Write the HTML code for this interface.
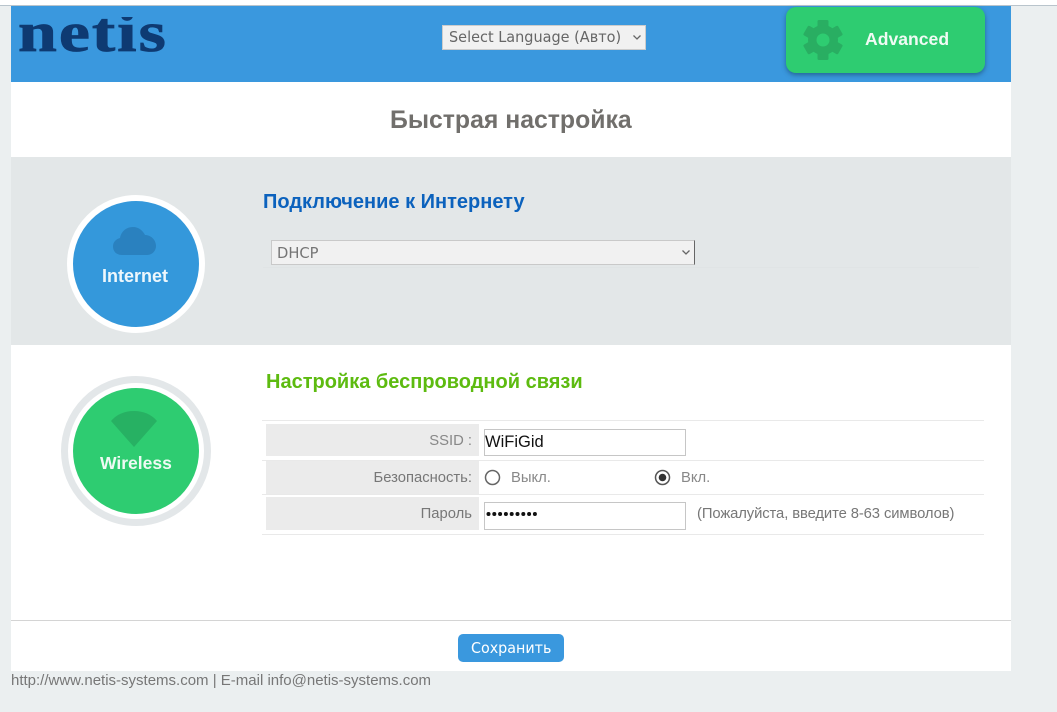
<!DOCTYPE html>
<html><head><meta charset="utf-8">
<style>
html,body{margin:0;padding:0;width:1057px;height:712px;overflow:hidden;background:#ebeff0;font-family:"Liberation Sans",sans-serif;}
.a{position:absolute;}
.t{position:absolute;white-space:nowrap;line-height:1;}
</style></head><body>
<div class="a" style="left:0;top:0;width:1057px;height:5px;background:#fff"></div>
<div class="a" style="left:0;top:5px;width:1057px;height:1px;background:#b9c4cc"></div>
<div class="a" style="left:11px;top:6px;width:1000px;height:76px;background:#3a98de"></div>
<div class="a" style="left:11px;top:82px;width:1000px;height:589px;background:#fff"></div>

<div class="t" style="left:18px;top:5px;font-family:'Liberation Serif',serif;font-weight:bold;font-size:56px;color:#0e3a72;letter-spacing:1.6px;-webkit-text-stroke:.8px #0e3a72;transform-origin:0 0;transform:scaleX(1.248);clip-path:inset(12px -5px 0 -5px)">netis</div>

<div class="a" style="left:442px;top:25px;width:204px;height:25px;box-sizing:border-box;background:#f1f1f1;border:1px solid #ccc"></div>
<div class="t" style="left:449px;top:30px;font-family:'DejaVu Sans',sans-serif;font-size:15px;color:#666;transform-origin:0 0;transform:scaleX(.964)">Select Language (Авто)</div>
<svg class="a" style="left:631px;top:33px" width="14" height="10"><path d="M2.500 2.500l3.500 3.500 3.500-3.500" fill="none" stroke="#666" stroke-width="1.300"/></svg>

<div class="a" style="left:786px;top:7px;width:199px;height:66px;background:#2ecc71;border-radius:10px;box-shadow:0 2px 5px rgba(20,60,90,.55)"></div>
<svg class="a" style="left:802px;top:19px" width="42" height="42" viewBox="0 0 42 42"><g fill="#29ae62"><rect x="15.500" y="1" width="11" height="40" rx="1.500"/><rect x="15.500" y="1" width="11" height="40" rx="1.500" transform="rotate(60 21 21)"/><rect x="15.500" y="1" width="11" height="40" rx="1.500" transform="rotate(120 21 21)"/><circle cx="21" cy="21" r="15"/></g><circle cx="21" cy="21" r="6.500" fill="#2ecc71"/></svg>
<div class="t" style="left:865px;top:31px;font-weight:bold;font-size:17.600px;color:#f0fbf4">Advanced</div>

<div class="t" style="left:390px;top:109px;font-weight:bold;font-size:24.800px;color:#716f6c">Быстрая настройка</div>

<div class="a" style="left:11px;top:157px;width:1000px;height:188px;background:#e3e7e8"></div>

<div class="a" style="left:67px;top:195px;width:138px;height:138px;border-radius:50%;background:#fff"></div>
<div class="a" style="left:73px;top:201px;width:126px;height:126px;border-radius:50%;background:#3498db"></div>
<svg class="a" style="left:112px;top:226px" width="46" height="30" viewBox="0 0 46 30"><path fill="#2a81bf" d="M10 29C4 29 1 25 1 20.500 1 16 4 13 8 12 9 6 14 1 21 1 27 1 31 5 33 9 39 9 44 14 44 20 44 25 40 29 35 29z"/></svg>
<div class="t" style="left:102px;top:267px;font-weight:bold;font-size:18px;color:#eef7fc">Internet</div>

<div class="t" style="left:263px;top:192px;font-weight:bold;font-size:20px;color:#0c62bd">Подключение к Интернету</div>
<div class="a" style="left:271px;top:240px;width:424px;height:25px;box-sizing:border-box;background:#f1f1f1;border:1px solid #c9c9c9;border-right:1px solid #666"></div>
<div class="t" style="left:277px;top:246px;font-family:'DejaVu Sans',sans-serif;font-size:15px;color:#757575;transform-origin:0 0;transform:scaleX(.98)">DHCP</div>
<svg class="a" style="left:680px;top:248px" width="14" height="10"><path d="M2.500 2.500l3.500 3.500 3.500-3.500" fill="none" stroke="#666" stroke-width="1.300"/></svg>
<div class="a" style="left:263px;top:267px;width:716px;height:1px;background:#e0e4e5"></div>

<div class="a" style="left:61px;top:376px;width:150px;height:150px;box-sizing:border-box;border-radius:50%;border:7px solid #e3e7e9;background:#fff"></div>
<div class="a" style="left:73px;top:388px;width:126px;height:126px;border-radius:50%;background:#2ecc71"></div>
<svg class="a" style="left:110px;top:410px" width="48" height="38" viewBox="0 0 48 38"><path fill="#27b163" d="M1 11C7 4 15 1 24 1s17 3 23 10L24 37z"/></svg>
<div class="t" style="left:100px;top:455px;font-weight:bold;font-size:17.500px;color:#eefaf3">Wireless</div>

<div class="t" style="left:266px;top:372px;font-weight:bold;font-size:20px;color:#5dbb10">Настройка беспроводной связи</div>

<div class="a" style="left:262px;top:420px;width:722px;height:1px;background:#e9e9e9"></div>
<div class="a" style="left:262px;top:460px;width:722px;height:1px;background:#e9e9e9"></div>
<div class="a" style="left:262px;top:494px;width:722px;height:1px;background:#e9e9e9"></div>
<div class="a" style="left:262px;top:534px;width:722px;height:1px;background:#e9e9e9"></div>
<div class="a" style="left:266px;top:424px;width:213px;height:32px;background:#ebebeb"></div>
<div class="a" style="left:266px;top:461px;width:213px;height:33px;background:#ebebeb"></div>
<div class="a" style="left:266px;top:497px;width:213px;height:33px;background:#ebebeb"></div>

<div class="t" style="right:585px;top:434px;font-size:14.800px;color:#888">SSID :</div>
<div class="t" style="right:585px;top:471px;font-size:14.800px;color:#777">Безопасность:</div>
<div class="t" style="right:585px;top:507px;font-size:14.800px;color:#777">Пароль</div>

<div class="a" style="left:484px;top:429px;width:202px;height:27px;box-sizing:border-box;background:#fff;border:1px solid #c6c6c6"></div>
<div class="t" style="left:485px;top:434px;font-size:16.500px;color:#111">WiFiGid</div>
<div class="a" style="left:484px;top:502px;width:202px;height:28px;box-sizing:border-box;background:#fff;border:1px solid #c6c6c6"></div>
<svg class="a" style="left:486px;top:510px" width="54" height="8" viewBox="0 0 54 8" fill="#111"><circle cx="2.500" cy="4" r="2"/><circle cx="8.300" cy="4" r="2"/><circle cx="14.100" cy="4" r="2"/><circle cx="19.900" cy="4" r="2"/><circle cx="25.700" cy="4" r="2"/><circle cx="31.500" cy="4" r="2"/><circle cx="37.300" cy="4" r="2"/><circle cx="43.100" cy="4" r="2"/><circle cx="48.900" cy="4" r="2"/></svg>

<svg class="a" style="left:484px;top:469px" width="17" height="17"><circle cx="8.500" cy="8.500" r="7" fill="#fff" stroke="#666" stroke-width="1.500"/></svg>
<div class="t" style="left:511px;top:471px;font-size:14.800px;color:#888">Выкл.</div>
<svg class="a" style="left:654px;top:469px" width="17" height="17"><circle cx="8.500" cy="8.500" r="7" fill="#fff" stroke="#555" stroke-width="1.500"/><circle cx="8.500" cy="8.500" r="3.800" fill="#333"/></svg>
<div class="t" style="left:681px;top:471px;font-size:14.800px;color:#888">Вкл.</div>
<div class="t" style="left:697px;top:507px;font-size:14.800px;color:#777;letter-spacing:-.1px">(Пожалуйста, введите 8-63 символов)</div>

<div class="a" style="left:11px;top:620px;width:1000px;height:1px;background:#d4d4d4"></div>
<div class="a" style="left:458px;top:634px;width:106px;height:28px;background:#3a98de;border-radius:5px"></div>
<div class="t" style="left:471px;top:641px;font-family:'DejaVu Sans',sans-serif;font-size:15px;color:#fff;transform-origin:0 0;transform:scaleX(.953)">Сохранить</div>
<div class="t" style="left:11px;top:673px;font-size:15px;color:#777">http://www.netis-systems.com | E-mail info@netis-systems.com</div>
</body></html>
